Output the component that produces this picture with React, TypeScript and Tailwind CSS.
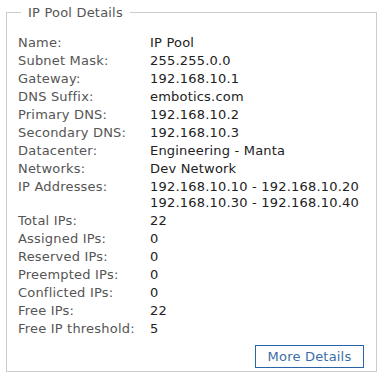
import React from "react";

const rows: [string, string[]][] = [
  ["Name:", ["IP Pool"]],
  ["Subnet Mask:", ["255.255.0.0"]],
  ["Gateway:", ["192.168.10.1"]],
  ["DNS Suffix:", ["embotics.com"]],
  ["Primary DNS:", ["192.168.10.2"]],
  ["Secondary DNS:", ["192.168.10.3"]],
  ["Datacenter:", ["Engineering - Manta"]],
  ["Networks:", ["Dev Network"]],
  ["IP Addresses:", ["192.168.10.10 - 192.168.10.20", "192.168.10.30 - 192.168.10.40"]],
  ["Total IPs:", ["22"]],
  ["Assigned IPs:", ["0"]],
  ["Reserved IPs:", ["0"]],
  ["Preempted IPs:", ["0"]],
  ["Conflicted IPs:", ["0"]],
  ["Free IPs:", ["22"]],
  ["Free IP threshold:", ["5"]],
];

export default function App() {
  return (
    <div
      className="w-[384px] h-[381px] bg-white pl-[6px] pr-[7px] pt-[12px]"
      style={{ fontFamily: '"DejaVu Sans", Verdana, sans-serif' }}
    >
      <div className="relative border border-[#cccccc] h-[360px] pt-[21px] pl-[11px] pr-[12px]">
        <div className="absolute left-[14px] top-[-8px] bg-white px-[7px] text-[13px] leading-[16px] tracking-[0.2px] text-[#555555]">
          IP Pool Details
        </div>
        <div className="flex flex-col">
          {rows.map(([label, values]) => (
            <div key={label} className="flex py-[1px] text-[13px] leading-[16px] tracking-[0.2px]">
              <div className="w-[132px] shrink-0 text-[#555555]">{label}</div>
              <div className="flex flex-col text-[#222222] whitespace-nowrap">
                {values.map((v) => (
                  <div key={v}>{v}</div>
                ))}
              </div>
            </div>
          ))}
        </div>
        <div className="flex justify-end mt-[7px]">
          <button className="w-[109px] h-[23px] border border-[#2a64a8] text-[#3b6ea8] text-[13px] leading-[16px] tracking-[0.2px] bg-white">
            More Details
          </button>
        </div>
      </div>
    </div>
  );
}
